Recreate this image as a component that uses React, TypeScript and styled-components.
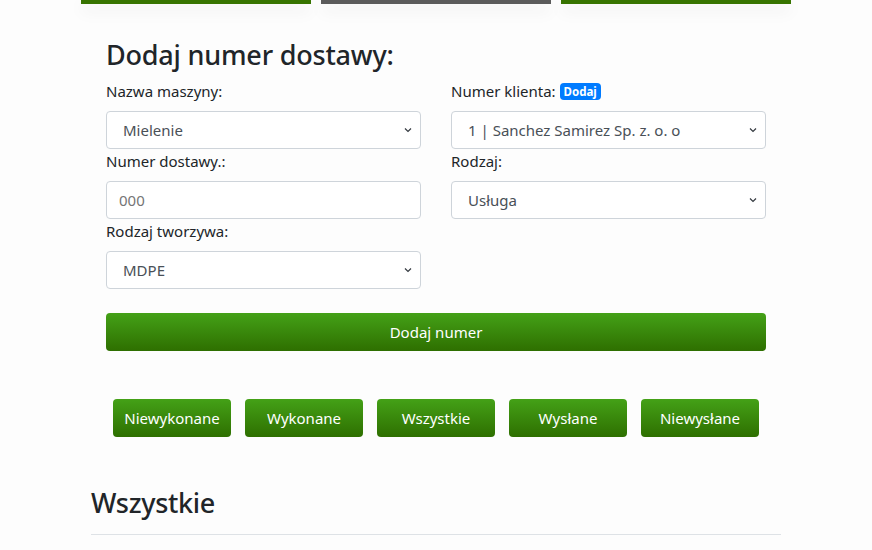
import React from "react";
import styled, { createGlobalStyle } from "styled-components";

const Global = createGlobalStyle`
  html, body { margin: 0; padding: 0; background: #fdfdfd; }
  body { font-family: "Noto Sans", "Open Sans", sans-serif; color: #212529; }
  * { box-sizing: border-box; }
`;

const Page = styled.div`
  width: 872px;
  display: flex;
  flex-direction: column;
  align-items: center;
`;

const CardRow = styled.div`
  width: 710px;
  display: grid;
  grid-template-columns: repeat(3, 1fr);
  gap: 10px;
`;

const CardEdge = styled.div<{ $tone: "green" | "grey" }>`
  height: 4px;
  background: ${(p) => (p.$tone === "green" ? "#377400" : "#5b5b5b")};
  box-shadow: 0 6px 16px rgba(0, 0, 0, 0.1);
`;

const FormBox = styled.form`
  width: 660px;
  margin-top: 34px;
  display: flex;
  flex-direction: column;
`;

const Title = styled.h3`
  margin: 0 0 8px;
  font-size: 27px;
  font-weight: 500;
  line-height: 33px;
  letter-spacing: -0.2px;
  color: #212529;
`;

const Grid = styled.div`
  display: grid;
  grid-template-columns: 1fr 1fr;
  column-gap: 30px;
`;

const Field = styled.div`
  display: flex;
  flex-direction: column;
`;

const Label = styled.label`
  font-size: 15px;
  height: 24px;
  line-height: 24px;
  margin-bottom: 8px;
  display: flex;
  align-items: center;
  gap: 4px;
`;

const Badge = styled.span`
  background: #007bff;
  color: #fff;
  font-size: 11.5px;
  font-weight: 700;
  line-height: 17px;
  padding: 0 4px;
  border-radius: 4px;
`;

const SelectWrap = styled.div`
  position: relative;
  height: 38px;
`;

const Select = styled.select`
  appearance: none;
  width: 100%;
  height: 38px;
  border: 1px solid #ced4da;
  border-radius: 4px;
  background: #fff;
  color: #495057;
  font-family: inherit;
  font-size: 15px;
  padding: 0 30px 0 16px;
  outline: none;
`;

const Chevron = styled.svg`
  position: absolute;
  right: 9px;
  top: 16px;
  pointer-events: none;
`;

const Input = styled.input`
  width: 100%;
  height: 38px;
  border: 1px solid #ced4da;
  border-radius: 4px;
  background: #fff;
  color: #495057;
  font-family: inherit;
  font-size: 15px;
  padding: 0 12px;
  outline: none;
`;

const GreenButton = styled.button<{ $wide?: boolean }>`
  height: 38px;
  width: ${(p) => (p.$wide ? "100%" : "118px")};
  border: none;
  border-radius: 4px;
  background: linear-gradient(to bottom, #44a117, #2e6f00);
  color: #fff;
  font-family: inherit;
  font-size: 15px;
  letter-spacing: 0;
  cursor: pointer;
  padding: 0;
`;

const SubmitRow = styled.div`
  margin-top: 24px;
`;

const FilterRow = styled.div`
  margin-top: 48px;
  display: flex;
  gap: 14px;
  justify-content: center;
`;

const Section = styled.div`
  width: 690px;
  margin-top: 49px;
`;

const SectionTitle = styled.h3`
  margin: 0;
  font-size: 27px;
  font-weight: 500;
  line-height: 33px;
  letter-spacing: -0.3px;
  padding-bottom: 15px;
  border-bottom: 1px solid #dee2e6;
`;

const Arrow = () => (
  <Chevron width="8" height="6" viewBox="0 0 8 6">
    <path d="M1 1.5 L4 4.5 L7 1.5" fill="none" stroke="#343a40" strokeWidth="1.2" />
  </Chevron>
);

const SelectField = ({ label, value, extra }: { label: string; value: string; extra?: React.ReactNode }) => (
  <Field>
    <Label>
      {label}
      {extra}
    </Label>
    <SelectWrap>
      <Select defaultValue={value}>
        <option>{value}</option>
      </Select>
      <Arrow />
    </SelectWrap>
  </Field>
);

export default function App() {
  return (
    <>
      <Global />
      <Page>
        <CardRow>
          <CardEdge $tone="green" />
          <CardEdge $tone="grey" />
          <CardEdge $tone="green" />
        </CardRow>
        <FormBox onSubmit={(e) => e.preventDefault()}>
          <Title>Dodaj numer dostawy:</Title>
          <Grid>
            <SelectField label="Nazwa maszyny:" value="Mielenie" />
            <SelectField label="Numer klienta:" value="1 | Sanchez Samirez Sp. z. o. o" extra={<Badge>Dodaj</Badge>} />
            <Field>
              <Label>Numer dostawy.:</Label>
              <Input placeholder="000" />
            </Field>
            <SelectField label="Rodzaj:" value="Usługa" />
            <SelectField label="Rodzaj tworzywa:" value="MDPE" />
          </Grid>
          <SubmitRow>
            <GreenButton $wide type="submit">Dodaj numer</GreenButton>
          </SubmitRow>
        </FormBox>
        <FilterRow>
          {["Niewykonane", "Wykonane", "Wszystkie", "Wysłane", "Niewysłane"].map((t) => (
            <GreenButton key={t}>{t}</GreenButton>
          ))}
        </FilterRow>
        <Section>
          <SectionTitle>Wszystkie</SectionTitle>
        </Section>
      </Page>
    </>
  );
}
